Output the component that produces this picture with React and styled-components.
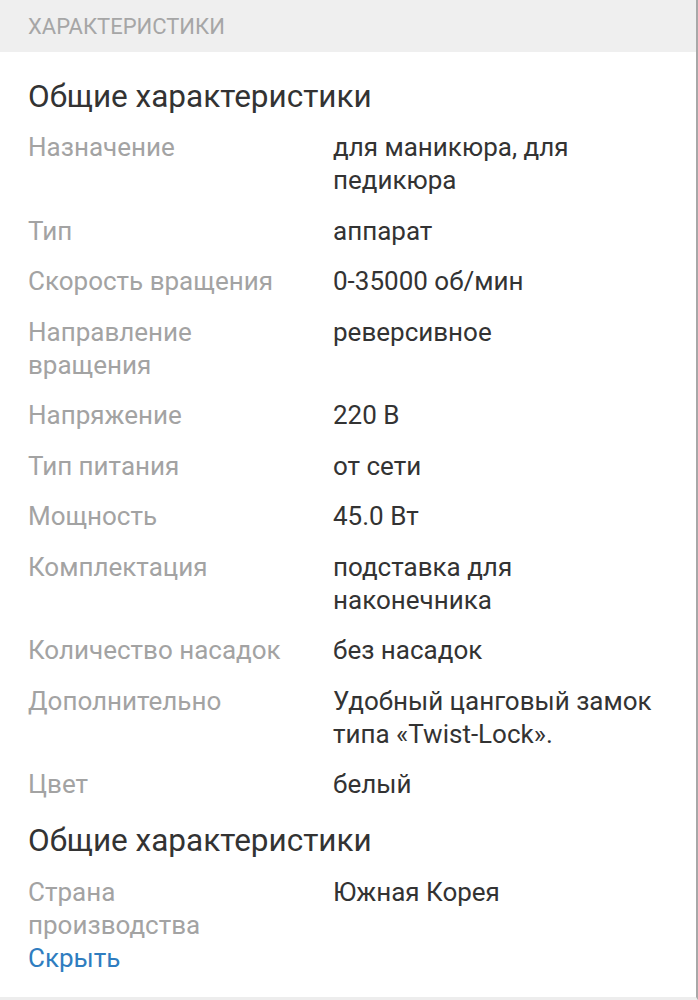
import React from "react";
import styled, { createGlobalStyle } from "styled-components";

const GlobalStyle = createGlobalStyle`
  html, body {
    margin: 0;
    padding: 0;
    background: #fff;
  }
  body {
    font-family: Roboto, "Noto Sans", sans-serif;
  }
`;

const Page = styled.div`
  width: 698px;
  height: 1000px;
  box-sizing: border-box;
  border-right: 2px solid #a8a8a8;
  border-bottom: 3px solid #ededed;
  overflow: hidden;
`;

const Header = styled.div`
  height: 52px;
  background: #efefef;
  display: flex;
  align-items: center;
  padding: 0 28px;
  font-size: 22px;
  color: #a6a6a6;
  text-transform: uppercase;
`;

const Body = styled.div`
  padding: 25px 28px 0 28px;
`;

const SectionTitle = styled.h2`
  margin: 0;
  font-weight: 400;
  font-size: 31.5px;
  line-height: 40px;
  color: #333;
  margin-bottom: ${(p) => p.$after}px;
`;

const Specs = styled.dl`
  margin: 0;
  display: grid;
  grid-template-columns: 258px 1fr;
  column-gap: 47px;
  row-gap: 17.5px;
  font-size: 26px;
  line-height: 33px;
  margin-bottom: ${(p) => p.$after}px;
`;

const Label = styled.dt`
  color: #a3a3a3;
`;

const Value = styled.dd`
  margin: 0;
  color: #333;
  padding-right: 12px;
`;

const HideLink = styled.a`
  display: block;
  font-size: 26px;
  line-height: 32px;
  color: #2f7dc0;
  text-decoration: none;
  cursor: pointer;
`;

const general = [
  ["Назначение", "для маникюра, для педикюра"],
  ["Тип", "аппарат"],
  ["Скорость вращения", "0-35000 об/мин"],
  ["Направление вращения", "реверсивное"],
  ["Напряжение", "220 В"],
  ["Тип питания", "от сети"],
  ["Мощность", "45.0 Вт"],
  ["Комплектация", "подставка для наконечника"],
  ["Количество насадок", "без насадок"],
  ["Дополнительно", "Удобный цанговый замок типа «Twist-Lock»."],
  ["Цвет", "белый"],
];

const origin = [["Страна производства", "Южная Корея"]];

const SpecList = ({ items, after }) => (
  <Specs $after={after}>
    {items.map(([k, v]) => (
      <React.Fragment key={k}>
        <Label>{k}</Label>
        <Value>{v}</Value>
      </React.Fragment>
    ))}
  </Specs>
);

export default function App() {
  return (
    <Page>
      <GlobalStyle />
      <Header>Характеристики</Header>
      <Body>
        <SectionTitle $after={14}>Общие характеристики</SectionTitle>
        <SpecList items={general} after={20} />
        <SectionTitle $after={15}>Общие характеристики</SectionTitle>
        <SpecList items={origin} after={0} />
        <HideLink>Скрыть</HideLink>
      </Body>
    </Page>
  );
}
